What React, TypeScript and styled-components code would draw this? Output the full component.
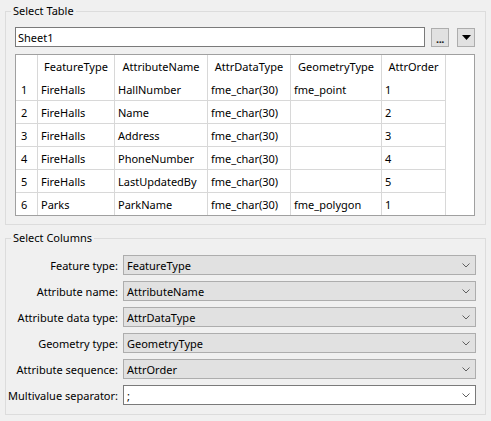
import React from 'react';
import styled, { createGlobalStyle } from 'styled-components';

const GlobalStyle = createGlobalStyle`
  html, body {
    margin: 0;
    padding: 0;
    background: #f0f0f0;
  }
  body {
    font-family: "Noto Sans", Lato, sans-serif;
    font-size: 11px;
    color: #000;
  }
`;

const Page = styled.div`
  width: 491px;
  height: 421px;
  box-sizing: border-box;
  padding: 3px 5px 0 5px;
  display: flex;
  flex-direction: column;
  gap: 5px;
  background: #f0f0f0;
`;

const GroupBox = styled.fieldset`
  margin: 0;
  padding: 0;
  min-width: 0;
  border: 1px solid #dcdcdc;
`;

const Legend = styled.legend`
  margin-left: 5px;
  padding: 0 2px;
  line-height: 16px;
`;

const GroupBody = styled.div<{ $pad: string }>`
  padding: ${props => props.$pad};
`;

const TopRow = styled.div`
  display: flex;
  align-items: center;
  height: 20px;
`;

const TextInput = styled.div`
  flex: 1;
  height: 20px;
  box-sizing: border-box;
  border: 1px solid #7a7a7a;
  background: #fff;
  padding-left: 2px;
  display: flex;
  align-items: center;
`;

const ToolButton = styled.div<{ $gap: number }>`
  width: 18px;
  height: 19px;
  box-sizing: border-box;
  margin-left: ${props => props.$gap}px;
  border: 1px solid #adadad;
  background: #e1e1e1;
  display: flex;
  align-items: center;
  justify-content: center;
  line-height: 1;
`;

const Dots = styled.span`
  font-weight: bold;
  letter-spacing: -0.5px;
  margin-top: 3px;
  color: #222;
`;

const TableFrame = styled.div`
  margin-top: 7px;
  height: 162px;
  box-sizing: border-box;
  border: 1px solid #a0a0a0;
  background: #fff;
`;

const Row = styled.div<{ $height: number; $line: boolean }>`
  display: flex;
  height: ${props => props.$height}px;
  box-sizing: border-box;
  width: 430px;
  border-bottom: ${props => (props.$line ? '1px solid #d8d8d8' : 'none')};
`;

const Cell = styled.div<{ $width: number; $head?: boolean; $pad?: number }>`
  width: ${props => props.$width}px;
  flex: none;
  box-sizing: border-box;
  border-right: 1px solid #d8d8d8;
  padding-left: ${props => (props.$head ? 0 : props.$pad ?? 3)}px;
  display: flex;
  align-items: center;
  justify-content: ${props => (props.$head ? 'center' : 'flex-start')};
  white-space: nowrap;
  overflow: hidden;
`;

const FormGrid = styled.div`
  display: grid;
  grid-template-columns: 112px 1fr;
  column-gap: 5px;
  row-gap: 6px;
  align-items: center;
`;

const FieldLabel = styled.div`
  text-align: right;
  white-space: nowrap;
`;

const Combo = styled.div<{ $editable?: boolean }>`
  height: 20px;
  box-sizing: border-box;
  border: 1px solid ${props => (props.$editable ? '#7a7a7a' : '#adadad')};
  background: ${props => (props.$editable ? '#fff' : '#e1e1e1')};
  display: flex;
  align-items: center;
  justify-content: space-between;
  padding: 0 5px 0 3px;
`;

const Chevron = () => (
  <svg width="8" height="5" viewBox="0 0 8 5">
    <polyline points="0.5,0.5 4,4 7.5,0.5" fill="none" stroke="#606060" strokeWidth="1" />
  </svg>
);

const DownTriangle = () => (
  <svg width="9" height="5" viewBox="0 0 9 5">
    <polygon points="0,0 9,0 4.5,5" fill="#000" />
  </svg>
);

const widths = [22, 77, 93, 83, 91, 64];
const headers = ['', 'FeatureType', 'AttributeName', 'AttrDataType', 'GeometryType', 'AttrOrder'];
const rows = [
  ['1', 'FireHalls', 'HallNumber', 'fme_char(30)', 'fme_point', '1'],
  ['2', 'FireHalls', 'Name', 'fme_char(30)', '', '2'],
  ['3', 'FireHalls', 'Address', 'fme_char(30)', '', '3'],
  ['4', 'FireHalls', 'PhoneNumber', 'fme_char(30)', '', '4'],
  ['5', 'FireHalls', 'LastUpdatedBy', 'fme_char(30)', '', '5'],
  ['6', 'Parks', 'ParkName', 'fme_char(30)', 'fme_polygon', '1'],
];

const fields = [
  { label: 'Feature type:', value: 'FeatureType' },
  { label: 'Attribute name:', value: 'AttributeName' },
  { label: 'Attribute data type:', value: 'AttrDataType' },
  { label: 'Geometry type:', value: 'GeometryType' },
  { label: 'Attribute sequence:', value: 'AttrOrder' },
  { label: 'Multivalue separator:', value: ';', editable: true },
];

const App: React.FC = () => {
  return (
    <>
      <GlobalStyle />
      <Page>
        <GroupBox>
          <Legend>Select Table</Legend>
          <GroupBody $pad="8px 10px 8px 9px">
            <TopRow>
              <TextInput>Sheet1</TextInput>
              <ToolButton $gap={6}>
                <Dots>...</Dots>
              </ToolButton>
              <ToolButton $gap={8}>
                <DownTriangle />
              </ToolButton>
            </TopRow>
            <TableFrame>
              <Row $height={23} $line={false}>
                {headers.map((h, i) => (
                  <Cell key={i} $width={widths[i]} $head>
                    {h}
                  </Cell>
                ))}
              </Row>
              {rows.map((r, ri) => {
                const last = ri === rows.length - 1;
                return (
                  <Row key={ri} $height={last ? 22 : 23} $line={!last}>
                    {r.map((c, ci) => (
                      <Cell key={ci} $width={widths[ci]} $pad={ci === 0 ? 5 : 3}>
                        {c}
                      </Cell>
                    ))}
                  </Row>
                );
              })}
            </TableFrame>
          </GroupBody>
        </GroupBox>
        <GroupBox>
          <Legend>Select Columns</Legend>
          <GroupBody $pad="9px 9px 9px 0">
            <FormGrid>
              {fields.map(f => (
                <React.Fragment key={f.label}>
                  <FieldLabel>{f.label}</FieldLabel>
                  <Combo $editable={f.editable}>
                    <span>{f.value}</span>
                    <Chevron />
                  </Combo>
                </React.Fragment>
              ))}
            </FormGrid>
          </GroupBody>
        </GroupBox>
      </Page>
    </>
  );
};

export default App;
